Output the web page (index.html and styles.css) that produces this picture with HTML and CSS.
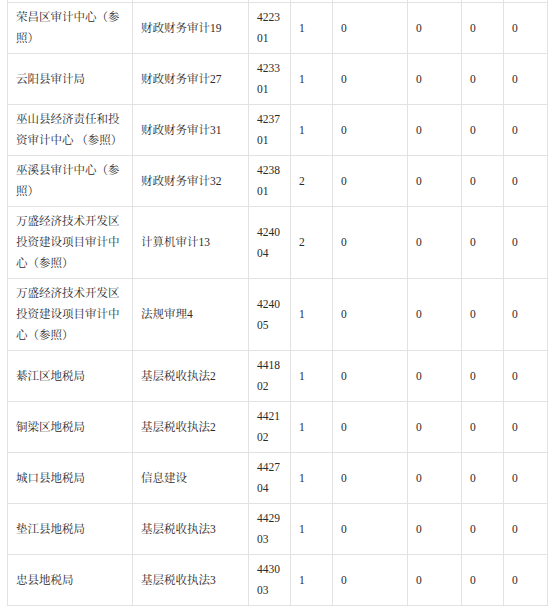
FILE: index.html
```html
<!DOCTYPE html>
<html lang="zh-CN">
<head>
<meta charset="utf-8">
<title>职位表</title>
<link rel="stylesheet" href="styles.css">
</head>
<body>
<div class="page">
<table class="grid">
<colgroup>
<col class="c-unit"><col class="c-post"><col class="c-code"><col class="c-n1"><col class="c-n2"><col class="c-n3"><col class="c-n4"><col class="c-n5">
</colgroup>
<tbody>
<tr class="cut"><td></td><td></td><td></td><td></td><td></td><td></td><td></td><td></td></tr>
<tr><td>荣昌区审计中心（参照）</td><td>财政财务审计19</td><td class="code">422301</td><td>1</td><td>0</td><td>0</td><td>0</td><td>0</td></tr>
<tr><td>云阳县审计局</td><td>财政财务审计27</td><td class="code">423301</td><td>1</td><td>0</td><td>0</td><td>0</td><td>0</td></tr>
<tr><td>巫山县经济责任和投资审计中心 （参照）</td><td>财政财务审计31</td><td class="code">423701</td><td>1</td><td>0</td><td>0</td><td>0</td><td>0</td></tr>
<tr><td>巫溪县审计中心（参照）</td><td>财政财务审计32</td><td class="code">423801</td><td>2</td><td>0</td><td>0</td><td>0</td><td>0</td></tr>
<tr><td>万盛经济技术开发区投资建设项目审计中心（参照）</td><td>计算机审计13</td><td class="code">424004</td><td>2</td><td>0</td><td>0</td><td>0</td><td>0</td></tr>
<tr><td>万盛经济技术开发区投资建设项目审计中心（参照）</td><td>法规审理4</td><td class="code">424005</td><td>1</td><td>0</td><td>0</td><td>0</td><td>0</td></tr>
<tr><td>綦江区地税局</td><td>基层税收执法2</td><td class="code">441802</td><td>1</td><td>0</td><td>0</td><td>0</td><td>0</td></tr>
<tr><td>铜梁区地税局</td><td>基层税收执法2</td><td class="code">442102</td><td>1</td><td>0</td><td>0</td><td>0</td><td>0</td></tr>
<tr><td>城口县地税局</td><td>信息建设</td><td class="code">442704</td><td>1</td><td>0</td><td>0</td><td>0</td><td>0</td></tr>
<tr><td>垫江县地税局</td><td>基层税收执法3</td><td class="code">442903</td><td>1</td><td>0</td><td>0</td><td>0</td><td>0</td></tr>
<tr><td>忠县地税局</td><td>基层税收执法3</td><td class="code">443003</td><td>1</td><td>0</td><td>0</td><td>0</td><td>0</td></tr>
<tr class="next"><td></td><td></td><td></td><td></td><td></td><td></td><td></td><td></td></tr>
</tbody>
</table>
</div>
</body>
</html>
```

FILE: styles.css
```css
html, body {
  margin: 0;
  padding: 0;
  background: #ffffff;
}

.page {
  padding: 0 0 0 7px;
  overflow: hidden;
  height: 606px;
}

.grid {
  border-collapse: collapse;
  table-layout: fixed;
  width: 540px;
  font-family: "Liberation Serif", "Noto Serif CJK SC", "Noto Sans CJK SC", serif;
  font-size: 11.5px;
  line-height: 21px;
  color: #2a2a2a;
}

.c-unit { width: 125px; }
.c-post { width: 116px; }
.c-code { width: 42px; }
.c-n1 { width: 42px; }
.c-n2 { width: 75px; }
.c-n3 { width: 54px; }
.c-n4 { width: 42px; }
.c-n5 { width: 44px; }

.grid td {
  border: 1px solid #e2e2e2;
  padding: 4px 8px;
  vertical-align: middle;
  text-align: left;
  height: 42px;
}

.grid td.code {
  word-break: break-all;
}

.grid tr.cut td {
  border-top: 0;
  height: 2px;
  padding: 0;
}

.grid tr.next td {
  border-bottom: 0;
  height: 42px;
}
```
